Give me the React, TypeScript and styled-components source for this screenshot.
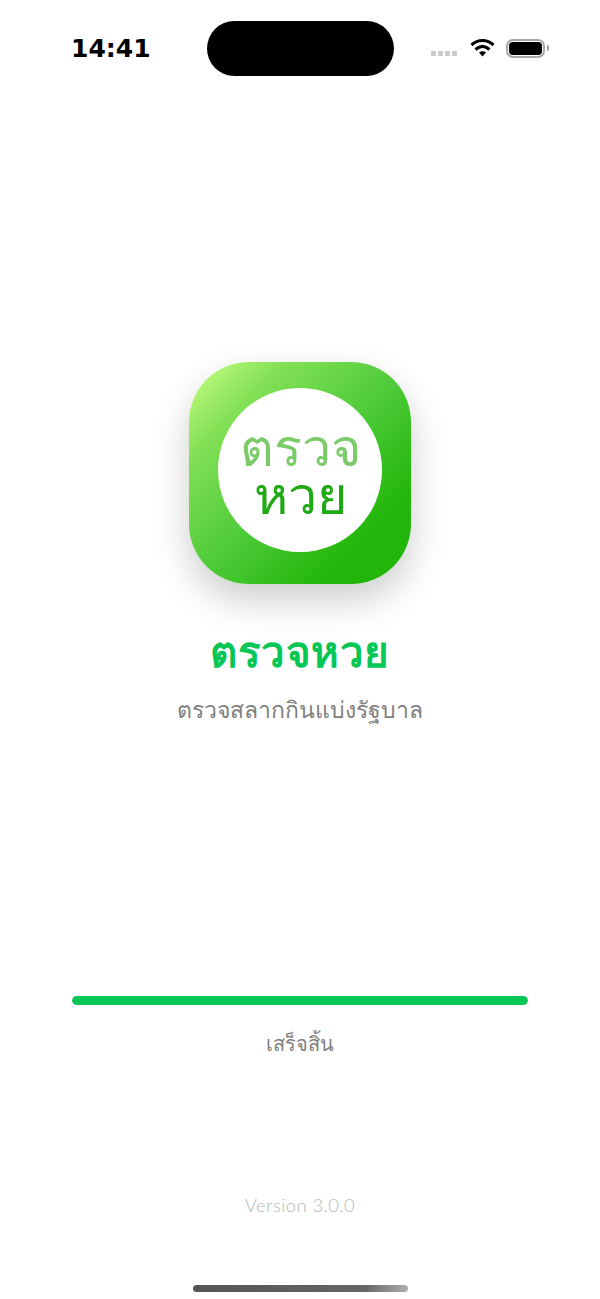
import styled, { createGlobalStyle } from "styled-components";

const GlobalStyle = createGlobalStyle`
  html, body {
    margin: 0;
    padding: 0;
    background: #ffffff;
  }
`;

const Screen = styled.div`
  width: 600px;
  height: 1299px;
  display: flex;
  flex-direction: column;
  overflow: hidden;
  font-family: "Noto Sans", "Liberation Sans", sans-serif;
`;

const StatusBar = styled.div`
  display: flex;
  align-items: center;
  height: 55px;
  margin-top: 21px;
  padding: 0 50px 0 71px;
`;

const Clock = styled.span`
  width: 136px;
  font-family: "DejaVu Sans", sans-serif;
  font-size: 25px;
  font-weight: 700;
  color: #000000;
`;

const Island = styled.div`
  width: 187px;
  height: 55px;
  border-radius: 28px;
  background: #000000;
`;

const StatusIcons = styled.div`
  display: flex;
  align-items: center;
  margin-left: 37px;
`;

const SignalDots = styled.div`
  display: flex;
  gap: 2px;
  margin-top: 9px;
`;

const SignalDot = styled.span`
  width: 5px;
  height: 5px;
  border-radius: 1px;
  background: #c9c9c9;
`;

const WifiIcon = styled.svg`
  width: 25px;
  height: 19px;
  margin: 0 11px 2px 13px;
`;

const Battery = styled.div`
  position: relative;
  width: 39px;
  height: 19px;
  padding: 1px;
  box-sizing: border-box;
  border: 2px solid #a8a8a8;
  border-radius: 7px;

  &::before {
    content: "";
    display: block;
    height: 100%;
    border-radius: 4px;
    background: #000000;
  }

  &::after {
    content: "";
    position: absolute;
    right: -6px;
    top: 4px;
    width: 2px;
    height: 6px;
    border-radius: 0 2px 2px 0;
    background: #9a9a9a;
  }
`;

const Main = styled.main`
  flex: 1;
  display: flex;
  flex-direction: column;
  align-items: center;
  padding-top: 286px;
`;

const AppIcon = styled.div`
  width: 222px;
  height: 222px;
  display: flex;
  align-items: center;
  justify-content: center;
  padding-bottom: 6px;
  box-sizing: border-box;
  border-radius: 60px;
  background: linear-gradient(135deg, #ccff85 0%, #82e055 22%, #4fcb3a 50%, #22b60a 80%, #22b60a 100%);
  box-shadow: 0 16px 36px rgba(0, 0, 0, 0.2);
`;

const IconCircle = styled.div`
  width: 164px;
  height: 164px;
  display: flex;
  flex-direction: column;
  align-items: center;
  justify-content: center;
  border-radius: 50%;
  background: #ffffff;
`;

const IconWord = styled.span<{ $tone: string }>`
  font-size: 52px;
  line-height: 48px;
  color: ${(p) => p.$tone};
`;

const Title = styled.h1`
  margin: 39px 0 0;
  font-size: 42px;
  line-height: 56px;
  font-weight: 700;
  letter-spacing: 0.5px;
  color: #06c755;
`;

const Subtitle = styled.p`
  margin: 15px 0 0;
  font-size: 23px;
  line-height: 30px;
  color: #808080;
`;

const ProgressTrack = styled.div`
  width: 456px;
  height: 9px;
  margin-top: 272px;
  border-radius: 5px;
  background: #e6e6e6;
  overflow: hidden;
`;

const ProgressFill = styled.div`
  height: 100%;
  border-radius: 5px;
  background: #06c755;
`;

const ProgressLabel = styled.p`
  margin: 24px 0 0;
  font-size: 20px;
  line-height: 30px;
  color: #808080;
`;

const Version = styled.p`
  margin: 134px 0 0;
  font-family: "Lato", sans-serif;
  font-size: 18.5px;
  font-weight: 300;
  line-height: 24px;
  letter-spacing: 0.4px;
  color: #b8b8b8;
`;

const HomeIndicator = styled.div`
  width: 215px;
  height: 7px;
  margin: 0 auto 7px;
  border-radius: 4px;
  background: linear-gradient(90deg, #555555 0%, #666666 80%, #b0b0b0 100%);
`;

const progress = 100;

export default function App() {
  return (
    <>
      <GlobalStyle />
      <Screen>
        <StatusBar>
          <Clock>14:41</Clock>
          <Island />
          <StatusIcons>
            <SignalDots>
              <SignalDot />
              <SignalDot />
              <SignalDot />
              <SignalDot />
            </SignalDots>
            <WifiIcon viewBox="0 0 25 19">
              <path d="M1.500 7 C8 1 17 1 23.500 7" fill="none" stroke="#000" strokeWidth="3.200" />
              <path d="M5.500 11.500 C10 7.500 15 7.500 19.500 11.500" fill="none" stroke="#000" strokeWidth="3.200" />
              <path d="M9 14.500 L12.500 18.500 L16 14.500 C14 12.800 11 12.800 9 14.500 Z" fill="#000" />
            </WifiIcon>
            <Battery />
          </StatusIcons>
        </StatusBar>
        <Main>
          <AppIcon>
            <IconCircle>
              <IconWord $tone="#7ccb6a">ตรวจ</IconWord>
              <IconWord $tone="#1fa912">หวย</IconWord>
            </IconCircle>
          </AppIcon>
          <Title>ตรวจหวย</Title>
          <Subtitle>ตรวจสลากกินแบ่งรัฐบาล</Subtitle>
          <ProgressTrack>
            <ProgressFill style={{ width: `${progress}%` }} />
          </ProgressTrack>
          <ProgressLabel>เสร็จสิ้น</ProgressLabel>
          <Version>Version 3.0.0</Version>
        </Main>
        <HomeIndicator />
      </Screen>
    </>
  );
}
